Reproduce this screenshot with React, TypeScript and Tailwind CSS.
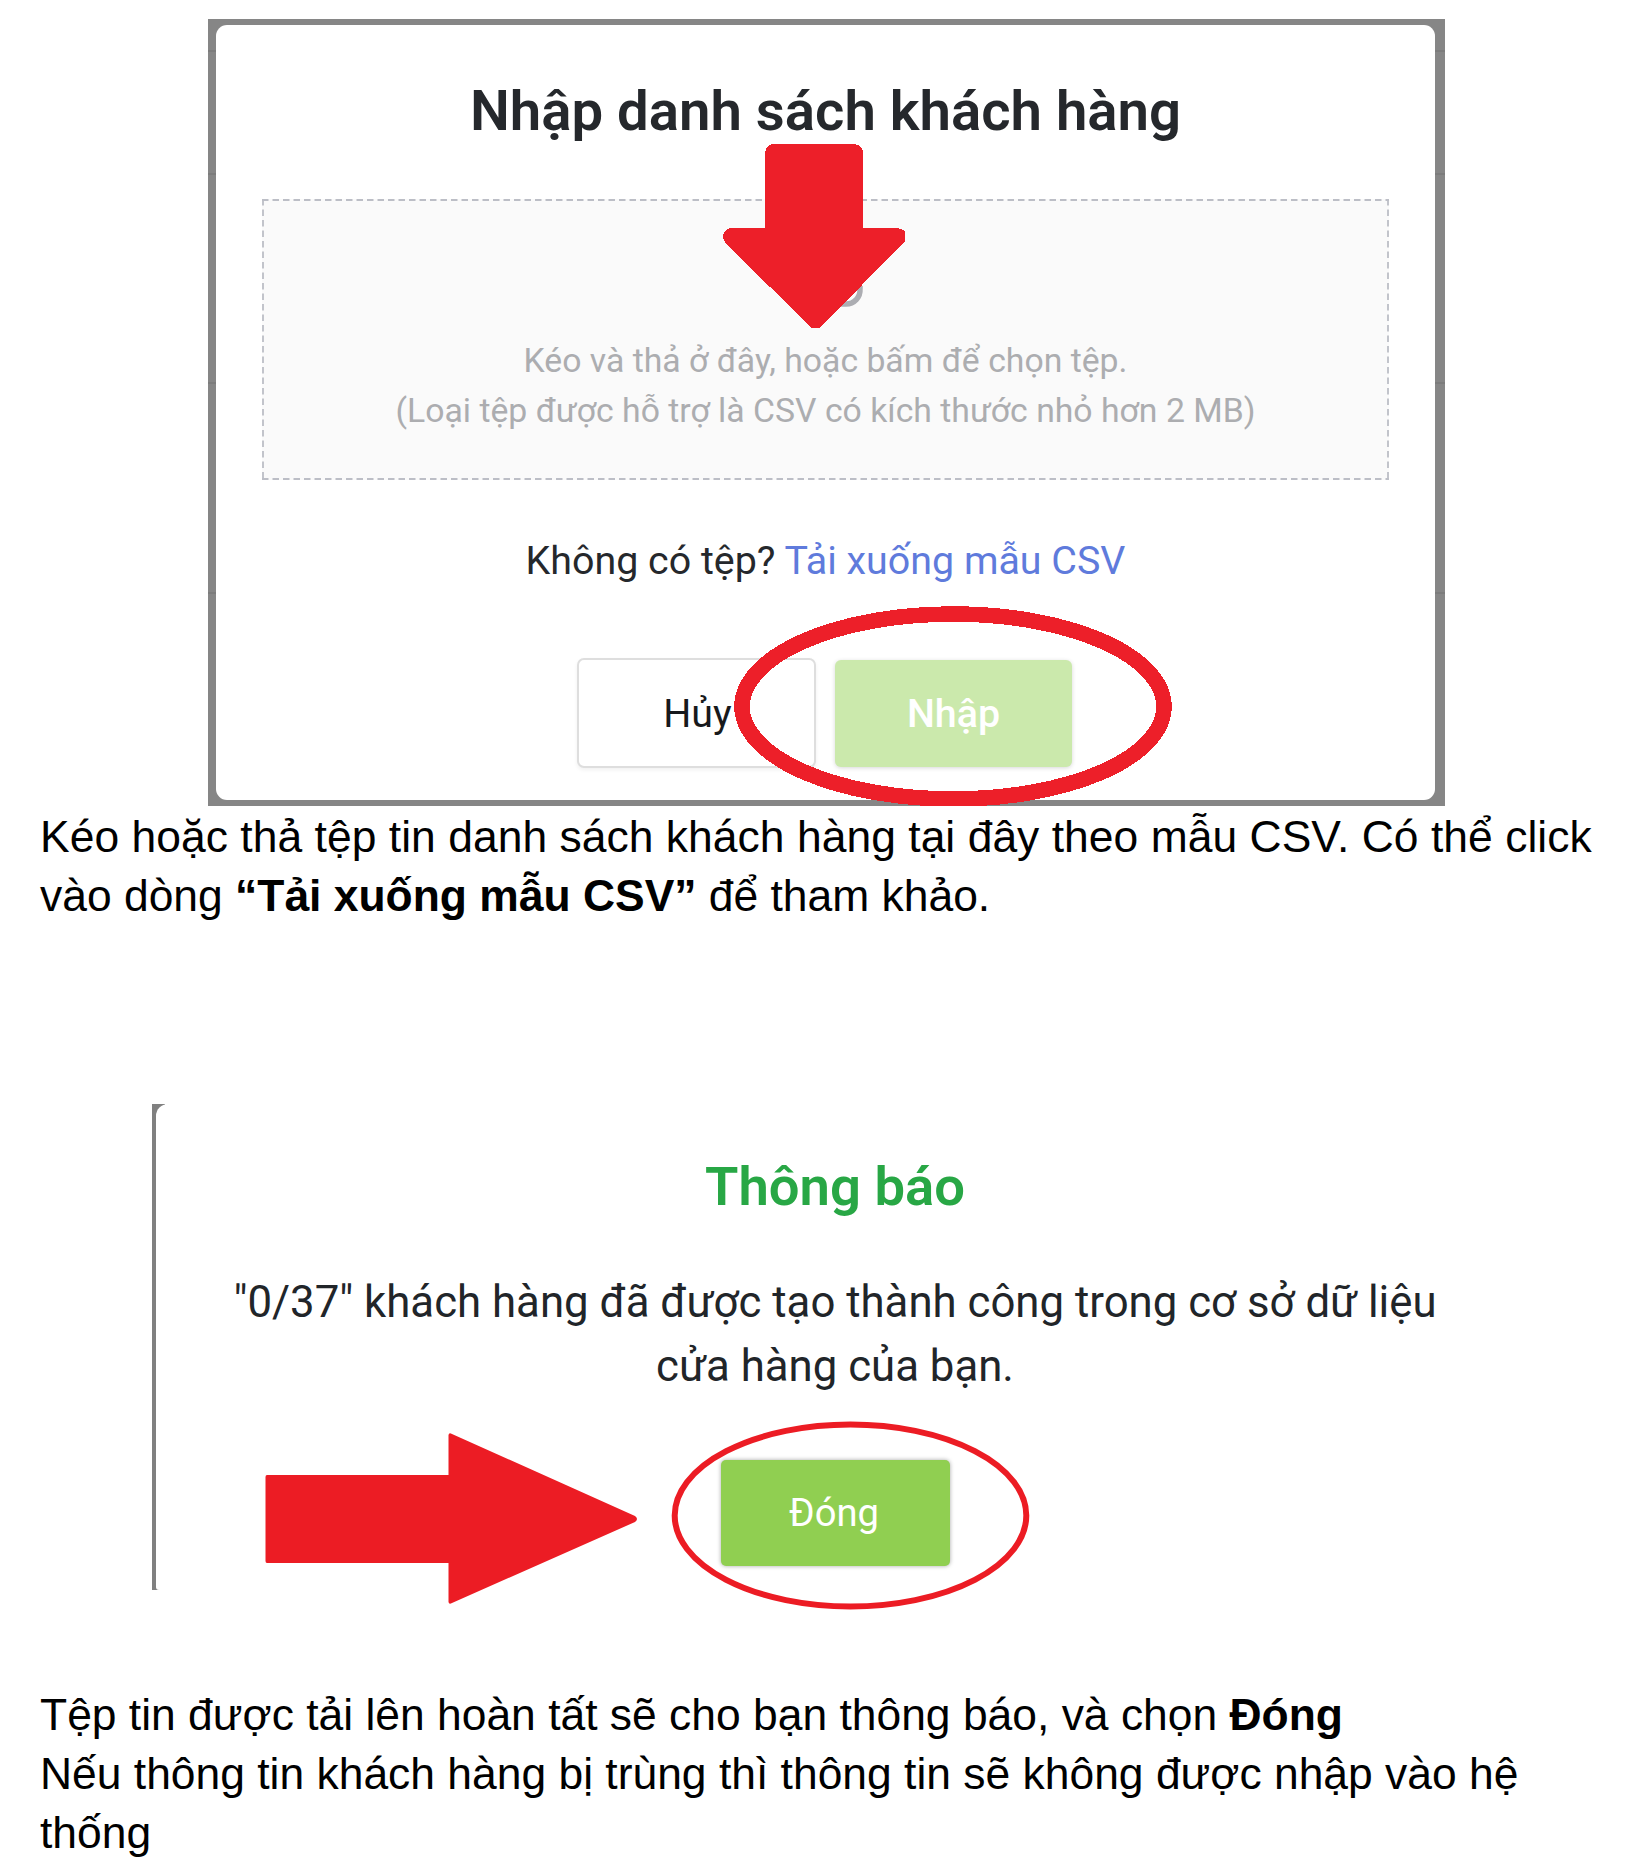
const BACKDROP_ROWS = ['top-[31px]', 'top-[154px]', 'top-[363px]', 'top-[573px]'];

function ImportDialog() {
  return (
    <figure className="relative ml-[208px] mt-[19px] h-[787px] w-[1237px] overflow-hidden bg-[#868686] pb-[6px] pl-[8px] pr-[10px] pt-[6px] font-['Roboto',sans-serif]">
      {BACKDROP_ROWS.map((top) => (
        <div key={top} className={`absolute left-0 h-[2px] w-full bg-[#7c7c7c] ${top}`} />
      ))}
      <div className="relative flex h-full flex-col items-center rounded-[11px] bg-white pt-[53px] text-[#25282c]">
        <h1 className="h-[66px] whitespace-nowrap text-[56.3px] font-semibold leading-[66px]">
          Nhập danh sách khách hàng
        </h1>
        <div className="relative mt-[55px] h-[281px] w-[1127px] bg-[#fafafa] text-center text-[33.75px] leading-[50px] text-[#acadb0]">
          <svg className="absolute inset-0" width="1127" height="281" fill="none">
            <path d="M0 1H1127M0 280H1127" stroke="#bcbec6" strokeWidth="1.8" strokeDasharray="6.5 4" />
            <path d="M1 0V281M1126 0V281" stroke="#bcbec6" strokeWidth="1.8" strokeDasharray="6.5 4" />
            <path d="M598 87V90A14 14 0 0 1 584 105H560" stroke="#acadb2" strokeWidth="5.500" />
          </svg>
          <p className="pt-[137px]">Kéo và thả ở đây, hoặc bấm để chọn tệp.</p>
          <p>(Loại tệp được hỗ trợ là CSV có kích thước nhỏ hơn 2 MB)</p>
        </div>
        <p className="mt-[51px] text-[39.4px] leading-[60px]">
          Không có tệp? <a className="text-[#5f7bdc]">Tải xuống mẫu CSV</a>
        </p>
        <div className="mt-[67px] flex items-center gap-[19px] pr-[2px] text-[39.4px]">
          <button className="h-[110px] w-[239px] rounded-[7px] border-2 border-[#dedede] bg-white pl-[2px] text-[#17191c] shadow-[0_2px_4px_rgba(0,0,0,0.06)]">
            Hủy
          </button>
          <button className="h-[107px] w-[237px] rounded-[6px] bg-[#cbe9ac] font-medium text-white shadow-[0_1px_4px_rgba(0,0,0,0.16)]">
            Nhập
          </button>
        </div>
      </div>
      <svg className="absolute left-0 top-0" width="1237" height="787" viewBox="208 19 1237 787" shapeRendering="crispEdges">
        <path
          d="M773 144H855Q863 146 863 153V228H896Q905 229 905 233V241L820 328H812L727 245Q722 239 723 235Q725 228 733 228H765V153Q766 145 773 144Z"
          fill="#ed1f29"
        />
        <ellipse cx="953" cy="706.500" rx="211" ry="92.500" fill="none" stroke="#ed1f29" strokeWidth="15.500" />
      </svg>
    </figure>
  );
}

function NoticeDialog() {
  return (
    <figure className="relative ml-[152px] mt-[179px] h-[486px] w-[1362px] font-['Roboto',sans-serif]">
      <div className="absolute left-0 top-0 h-full w-[13px] bg-[#808080]" />
      <div className="relative ml-[4px] flex h-full flex-col items-center rounded-bl-[3px] rounded-tl-[12px] bg-white pt-[51px] text-[#212529]">
        <h2 className="h-[64px] text-[54.4px] font-semibold leading-[64px] text-[#28a745]">Thông báo</h2>
        <p className="mt-[51px] whitespace-nowrap text-center text-[43.75px] leading-[64px]">
          "0/37" khách hàng đã được tạo thành công trong cơ sở dữ liệu
          <br />
          cửa hàng của bạn.
        </p>
        <button className="mt-[62px] h-[106px] w-[229px] shrink-0 rounded-[5px] bg-[#90cf51] pr-[2px] text-[38.2px] text-white shadow-[0_0_4px_rgba(0,0,0,0.35)]">
          Đóng
        </button>
      </div>
      <svg className="absolute left-0 top-0 overflow-visible" width="1362" height="486" viewBox="152 1104 1362 486">
        <path
          d="M267 1475H448.500V1435Q449 1432 452 1434L635 1516Q639 1519 635 1522L452 1603Q449 1605 448.500 1602V1563H267Q265.500 1563 265.500 1561V1477Q265.500 1475 267 1475Z"
          fill="#ec1c24"
        />
        <ellipse cx="850.500" cy="1515.500" rx="175.800" ry="91" fill="none" stroke="#ec1c24" strokeWidth="6" />
      </svg>
    </figure>
  );
}

export default function App() {
  return (
    <main className="flex h-[1873px] w-[1651px] flex-col overflow-hidden bg-white font-['Liberation_Sans',Arial,sans-serif] text-[44.42px] leading-[59px] text-black">
      <ImportDialog />
      <p className="ml-[40px] mt-[1px] whitespace-nowrap">
        <span className="tracking-[0.04px]">Kéo hoặc thả tệp tin danh sách khách hàng tại đây theo mẫu CSV. Có thể click</span>
        <br />
        vào dòng <b>“Tải xuống mẫu CSV”</b> để tham khảo.
      </p>
      <NoticeDialog />
      <p className="ml-[40px] mt-[95px] whitespace-nowrap">
        Tệp tin được tải lên hoàn tất sẽ cho bạn thông báo, và chọn <b>Đóng</b>
        <br />
        Nếu thông tin khách hàng bị trùng thì thông tin sẽ không được nhập vào hệ
        <br />
        thống
      </p>
    </main>
  );
}
